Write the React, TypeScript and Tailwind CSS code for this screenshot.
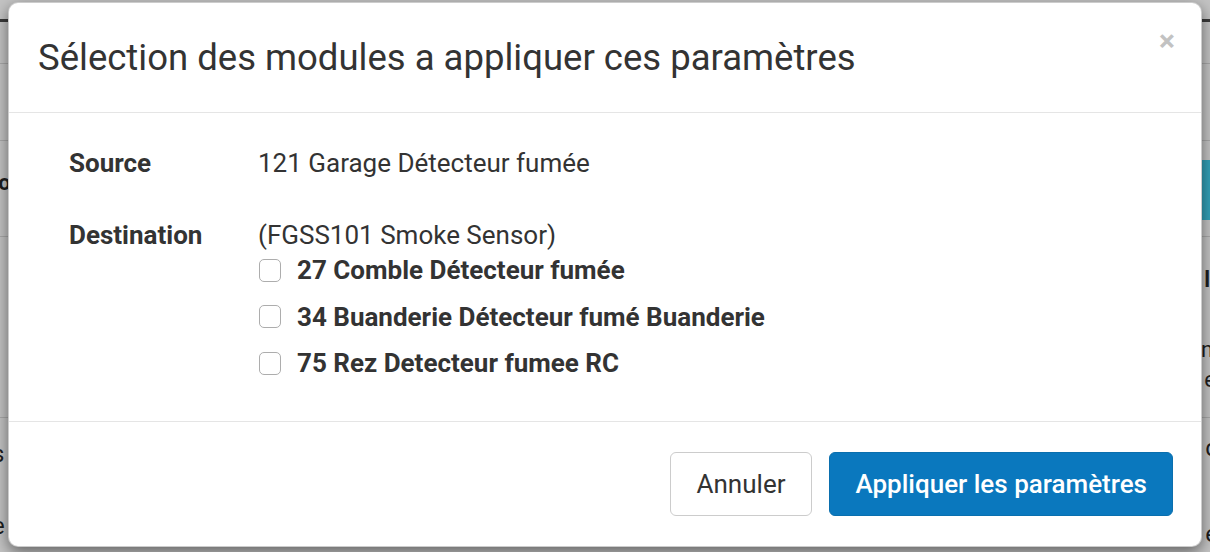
import { useState } from "react";

const modules = [
  { id: 27, label: "27 Comble Détecteur fumée" },
  { id: 34, label: "34 Buanderie Détecteur fumé Buanderie" },
  { id: 75, label: "75 Rez Detecteur fumee RC" },
];

// page derrière la modale (à peine visible sur les bords)
function PageFond() {
  return (
    <div className="h-[552px] w-[1210px] overflow-hidden bg-[#c4c4c4] text-[#1e1e1e] flex flex-col">
      <div className="h-[22px] border-b-[3px] border-[#3a3a3a] overflow-hidden flex items-end px-[60px]">
        <span className="text-[36px] leading-[36px] font-bold translate-y-[-14px]">Paramètres du Module 121</span>
      </div>
      <div className="h-[42px] border-b border-[#a9a9a9]" />
      <div className="h-[78px] border-b border-[#a9a9a9]" />
      <div className="h-[96px] flex justify-between">
        <span className="text-[22px] leading-[24px] font-bold -ml-[14px] mt-[30px]">Jour</span>
        <div className="h-[60px] mt-[19px] w-[40px] bg-[#33a1b8] text-white text-[24px] flex items-center">
          <span className="-ml-[4px]">U</span>
        </div>
      </div>
      <div className="h-[182px] border-t border-[#a9a9a9] flex justify-end">
        <div className="flex flex-col items-end text-[22px] leading-[22px] pt-[32px] gap-[8px] -mr-[6px]">
          <span className="font-bold">ll</span>
          <span className="font-bold">l</span>
          <span className="mt-[10px]">n'</span>
          <span>e</span>
        </div>
      </div>
      <div className="flex-1 border-t border-[#a9a9a9] flex justify-between text-[24px] leading-[36px]">
        <div className="flex flex-col -ml-[8px] pt-[18px]">
          <span>s</span>
          <span>l</span>
          <span>e</span>
        </div>
        <div className="flex flex-col -mr-[8px] pt-[12px] gap-[50px]">
          <span>c</span>
          <span>e</span>
        </div>
      </div>
    </div>
  );
}

export default function App() {
  const [coches, setCoches] = useState<number[]>([]);

  function basculer(id: number) {
    setCoches((c) => (c.includes(id) ? c.filter((x) => x !== id) : [...c, id]));
  }

  return (
    <div className="relative w-[1210px] h-[552px] overflow-hidden font-['Roboto',_'Liberation_Sans',_sans-serif] text-[#333]">
      <PageFond />

      {/* Modale */}
      <div className="absolute inset-0 pl-[8px] pt-[2px]">
        <div className="w-[1194px] h-[545px] bg-white rounded-[10px] border border-black/20 shadow-[0_5px_15px_rgba(0,0,0,0.5)] flex flex-col">
          {/* Header */}
          <div className="h-[110px] border-b border-[#e5e5e5] flex items-center justify-between pl-[29px] pr-[26px]">
            <h3 className="text-[36.5px] leading-[40px] font-normal text-[#333]">
              Sélection des modules a appliquer ces paramètres
            </h3>
            <button className="text-[30px] leading-none font-bold text-[#c2c2c2] -mt-[34px]">×</button>
          </div>

          {/* Body */}
          <div className="flex-1 pt-[38px] pl-[60px] text-[26px] leading-[24px]">
            <div className="flex">
              <div className="w-[189px] font-bold">Source</div>
              <div>121 Garage Détecteur fumée</div>
            </div>
            <div className="flex mt-[48px]">
              <div className="w-[189px] font-bold">Destination</div>
              <div className="flex flex-col">
                <div>(FGSS101 Smoke Sensor)</div>
                {modules.map((m) => (
                  <label key={m.id} className="h-[46.5px] flex items-center gap-[16px] cursor-pointer">
                    <input
                      type="checkbox"
                      checked={coches.includes(m.id)}
                      onChange={() => basculer(m.id)}
                      className="appearance-none w-[22px] h-[23px] rounded-[5px] border border-[#adadad] bg-white checked:bg-[#0a78be] ml-[1px]"
                    />
                    <span className="font-bold">{m.label}</span>
                  </label>
                ))}
              </div>
            </div>
          </div>

          {/* Footer */}
          <div className="h-[125px] border-t border-[#e5e5e5] flex items-center justify-end gap-[17px] pr-[28px]">
            <button className="h-[64px] px-[26px] rounded-[6px] border border-[#ccc] bg-white text-[26px] text-[#333]">
              Annuler
            </button>
            <button className="h-[64px] px-[25px] rounded-[6px] border border-[#0a6fae] bg-[#0a78be] text-[26px] font-medium text-white">
              Appliquer les paramètres
            </button>
          </div>
        </div>
      </div>
    </div>
  );
}
